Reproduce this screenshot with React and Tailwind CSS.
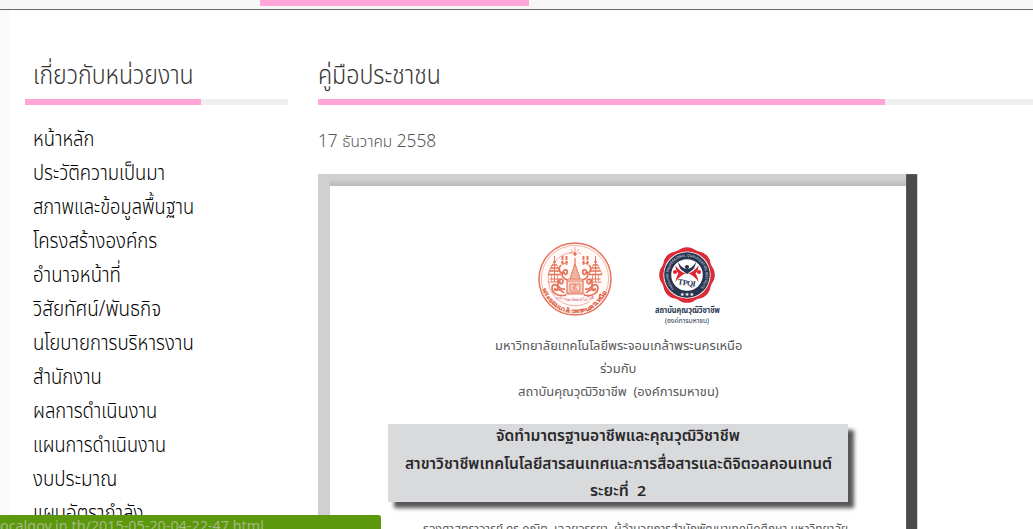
import React, { useLayoutEffect, useRef, useState } from 'react';

const menuItems = [
  { label: 'หน้าหลัก', width: 61 },
  { label: 'ประวัติความเป็นมา', width: 132 },
  { label: 'สภาพและข้อมูลพื้นฐาน', width: 161 },
  { label: 'โครงสร้างองค์กร', width: 124 },
  { label: 'อำนาจหน้าที่', width: 88 },
  { label: 'วิสัยทัศน์/พันธกิจ', width: 128 },
  { label: 'นโยบายการบริหารงาน', width: 161 },
  { label: 'สำนักงาน', width: 69 },
  { label: 'ผลการดำเนินงาน', width: 124 },
  { label: 'แผนการดำเนินงาน', width: 133 },
  { label: 'งบประมาณ', width: 84 },
  { label: 'แผนอัตรากำลัง', width: 110 },
];

// Condenses or widens one line of text so that it takes exactly the given width
function FitText({ width, className, children }) {
  const ref = useRef(null);
  const [scale, setScale] = useState(1);

  useLayoutEffect(() => {
    setScale(width / ref.current.offsetWidth);
  }, [width, children]);

  return (
    <span className="block" style={{ width }}>
      <span
        ref={ref}
        className={`inline-block origin-left whitespace-pre ${className || ''}`}
        style={{ transform: `scaleX(${scale})` }}
      >
        {children}
      </span>
    </span>
  );
}

// Tiered umbrella on either side of the crown
function TieredUmbrella({ x, y }) {
  return (
    <g transform={`translate(${x} ${y})`}>
      <path d="M0-15v26" strokeWidth=".9" />
      <path d="M-1.5-9h3M-2.5-6h5M-3.5-3h7M-5 0h10M-6.5 3.5h13" strokeWidth="1.5" />
      <path d="M-2.5-6l-4 9.5M2.5-6l4 9.5M-3 4v6M3 4v6" strokeWidth=".7" />
      <path d="M-5 8h10M-6 11h12" strokeWidth="1.2" />
    </g>
  );
}

function SideFlourish() {
  return (
    <g strokeWidth="1.7">
      <path d="M9 16c8 2 14-2 14-7s-6-4-6 0 4 2 3 0" />
      <path d="M10 10c5 1 8-3 7-7s-6-3-5 0 4 2 3-1" />
      <path d="M7 1c5-1 7-4 5-8s-5-2-4 1 3 1 3-1" />
      <path d="M13-6c3-1 4-5 1-8M11 14c4-4 6-4 10-3" />
    </g>
  );
}

function UniversitySeal() {
  return (
    <svg width="76" height="76" viewBox="-38 -38 76 76" fill="none" stroke="#e4735a">
      <circle r="36" strokeWidth="1.5" fill="#fffaf7" />
      <circle r="33.6" strokeWidth=".5" />
      <circle r="26.8" strokeWidth=".5" strokeDasharray="50 68" transform="rotate(162)" />
      <TieredUmbrella x={-20.5} y={-8} />
      <TieredUmbrella x={20.5} y={-8} />
      <g strokeWidth="1.9">
        <path d="M-12.5-23v9M-8.5-23v9M12.5-23v9M8.5-23v9" strokeDasharray="4 .8" />
        <path d="M-14-17q3 3 7 0M14-17q-3 3-7 0" strokeWidth="1" />
      </g>
      <path d="M0-32v5M-4-30l2 3M4-30l-2 3M-6-26h3M6-26h-3" strokeWidth=".6" />
      <circle cy="-25" r="1.3" fill="#e4735a" />
      <path d="M0-21v11M-2-12h4M-3-9h6M-4-6h8M-5-3h10M-7 0h14" strokeWidth="1.2" />
      <path d="M0-15l-5 15h10z" fill="#f3b29e" strokeWidth=".7" />
      <path d="M-8 2H8v12H-8z" fill="#fbd9cc" strokeWidth="1.2" />
      <path d="M-5 5H5v7H-5zM-2 6h3v2h-3v2h4M-10 15h20" strokeWidth=".9" />
      <SideFlourish />
      <g transform="scale(-1 1)">
        <SideFlourish />
      </g>
      <defs>
        <path id="seal-outer" d="M-33 9A34.2 34.2 0 0 0 33 9" />
        <path id="seal-inner" d="M-19 19.5Q0 25 19 19.5" />
      </defs>
      <text fill="#db583e" stroke="none" fontSize="6.4" fontWeight="700" fontFamily="Noto Sans, sans-serif">
        <textPath href="#seal-outer" startOffset="1" textLength="84" lengthAdjust="spacingAndGlyphs">พระจอมเกล้าพระนครเหนือ</textPath>
      </text>
      <text fill="#d64679" stroke="none" fontSize="4" fontFamily="Noto Sans, sans-serif">
        <textPath href="#seal-inner" textLength="38" lengthAdjust="spacingAndGlyphs">มหาวิทยาลัยเทคโนโลยี</textPath>
      </text>
    </svg>
  );
}

function InstituteBadge() {
  return (
    <svg width="58" height="58" viewBox="-29 -29 58 58">
      <g fill="#d92b38">
        <circle r="26.2" />
        {[0, 45, 90, 135, 180, 225, 270, 315].map((angle) => (
          <circle key={angle} cy="-14.5" r="13.3" transform={`rotate(${angle})`} />
        ))}
      </g>
      <circle r="23.6" fill="#fff" />
      <circle r="22.8" fill="#26344f" />
      <circle r="15.8" fill="#fff" />
      <defs>
        <path id="badge-ring" d="M-12.6 13.4A18.4 18.4 0 1 1 12.6 13.4" />
      </defs>
      <text fill="#b4bbc9" fontSize="3.8" fontWeight="700" fontFamily="Liberation Sans, sans-serif">
        <textPath href="#badge-ring" textLength="86" lengthAdjust="spacingAndGlyphs">
          THAILAND PROFESSIONAL QUALIFICATION INSTITUTE
        </textPath>
      </text>
      <g fill="#e2232e">
        <circle cx="-12" cy="-3" r="2" />
        <circle cx="12" cy="-3" r="2" />
        <path d="M-11.5-9.500Q-7-3-1-1.500q-6 1.500-10.500 8.500 1-6 3-8.500-3-3-3-8z" />
        <path d="M11.5-9.500Q7-3 1-1.500q6 1.500 10.500 8.500-1-6-3-8.500 3-3 3-8z" />
      </g>
      <circle cy="-8" r="2.1" fill="#26344f" />
      <path d="M-9-13q4 7 9 7t9-7Q8-6 4-4L0-1l-4-3Q-8-6-9-13z" fill="#26344f" />
      <text transform="rotate(8)" x="-8" y="10.5" textLength="18" fill="#26344f" fontSize="8" fontWeight="700" fontFamily="Liberation Serif, serif">TPQI</text>
      <text x="-7" y="21.2" textLength="14" fill="#fff" fontSize="5" fontFamily="DejaVu Sans, sans-serif">★★★</text>
    </svg>
  );
}

function Sidebar() {
  return (
    <aside className="w-[263px] shrink-0">
      <h2 className="h-[47px] pl-2 text-[26px] leading-[44px] font-light text-[#333]">
        <FitText width={161}>เกี่ยวกับหน่วยงาน</FitText>
      </h2>
      <div className="h-1.5 bg-[#efefef]">
        <div className="h-full w-[176px] bg-[#ffa5d8]" />
      </div>
      <ul className="pt-[15px] pl-2">
        {menuItems.map((item) => (
          <li key={item.label} className="h-[34px] text-[22px] leading-[34px] font-light text-black">
            <FitText width={item.width}>{item.label}</FitText>
          </li>
        ))}
      </ul>
    </aside>
  );
}

function DocumentPage() {
  return (
    <div className="flex h-[380px] w-[600px] bg-[#d0d0d0] pl-3">
      <div className="w-[576px]">
        <div className="h-3 bg-linear-to-b from-[#d0d0d0] from-40% to-[#b9b9b9]" />
        <div className="h-[368px] bg-white pt-[55px] text-[#58585a]">
          <div className="flex h-[93px] pl-[207px]">
            <UniversitySeal />
            <div className="ml-[37px] flex w-[74px] flex-col items-center pt-[5px]">
              <InstituteBadge />
              <div className="text-[8px] leading-[11px] font-bold text-[#26344f]">
                <FitText width={65}>สถาบันคุณวุฒิวิชาชีพ</FitText>
              </div>
              <div className="text-[7px] leading-[11px] text-[#26344f]">
                <FitText width={44}>(องค์การมหาชน)</FitText>
              </div>
            </div>
          </div>
          <div className="flex flex-col items-center text-[13px] leading-[23px]">
            <FitText width={247}>มหาวิทยาลัยเทคโนโลยีพระจอมเกล้าพระนครเหนือ</FitText>
            <FitText width={36}>ร่วมกับ</FitText>
            <FitText width={201}>สถาบันคุณวุฒิวิชาชีพ  (องค์การมหาชน)</FitText>
          </div>
          <div className="mt-[21px] ml-[58px] flow-root h-[78px] w-[460px] bg-[#d9dadc] shadow-[6px_6px_4px_#5a5558]">
            <div className="-mt-0.5 flex flex-col items-center text-[15px] leading-[27.5px] font-semibold text-[#29292b]">
              <FitText width={244}>จัดทำมาตรฐานอาชีพและคุณวุฒิวิชาชีพ</FitText>
              <FitText width={427}>สาขาวิชาชีพเทคโนโลยีสารสนเทศและการสื่อสารและดิจิตอลคอนเทนต์</FitText>
              <FitText width={56}>ระยะที่  2</FitText>
            </div>
          </div>
          <div className="mt-[15px] ml-[93px] text-[12px] leading-[23px]">
            <FitText width={425}>รองศาสตราจารย์ ดร.คณิต  เฉลยจรรยา  ผู้อำนวยการสำนักพัฒนาเทคนิคศึกษา มหาวิทยาลัย</FitText>
          </div>
        </div>
      </div>
      <div className="w-[11px] border-t border-l border-[#5c5c5c] bg-[#4b4b4b]" />
    </div>
  );
}

function App() {
  return (
    <div className="relative h-[529px] w-[1033px] overflow-hidden bg-[#fafafa] font-['Noto_Sans','Noto_Sans_Thai',sans-serif]">
      <header className="h-2.5 border-b border-[#666] bg-[#f7f7f7]">
        <div className="ml-[260px] h-1.5 w-[269px] bg-[#ffa5d8]" />
      </header>
      <div className="ml-2.5 flex h-[519px] gap-[30px] overflow-hidden bg-white pt-[42px] pl-[15px]">
        <Sidebar />
        <main className="w-[715px] shrink-0">
          <h1 className="h-[47px] text-[26px] leading-[44px] font-light text-[#333]">
            <FitText width={123}>คู่มือประชาชน</FitText>
          </h1>
          <div className="h-1.5 bg-[#efefef]">
            <div className="h-full w-[567px] bg-[#ffa5d8]" />
          </div>
          <div className="h-[69px] pt-[18px] text-[18px] leading-[34px] font-light text-[#555]">
            <FitText width={118}>
              17 <span className="text-[16px]">ธันวาคม</span> 2558
            </FitText>
          </div>
          <DocumentPage />
        </main>
      </div>
      <div className="absolute bottom-0 left-0 h-3.5 w-[381px] overflow-hidden rounded-tr-[3px] bg-[#5b980b] text-[15px] leading-[21px] text-[#a6b784]">
        <FitText width={264}>ocalgov.in.th/2015-05-20-04-22-47.html</FitText>
      </div>
    </div>
  );
}

export default App;
